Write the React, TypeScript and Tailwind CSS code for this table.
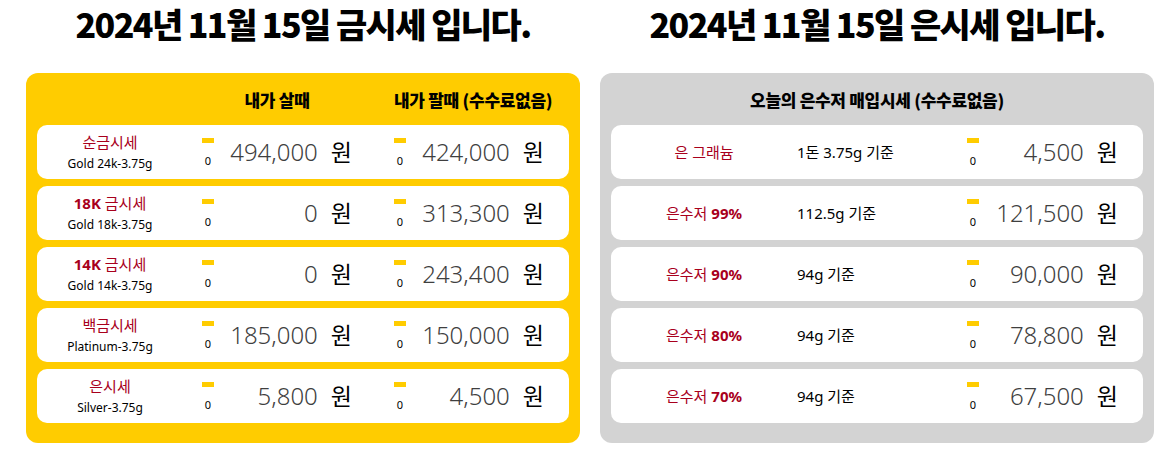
import React from "react";

type GoldRow = { name: string; bold?: string; sub: string; buy: string; sell: string };
type SilverRow = { name: string; bold?: string; desc: string; price: string };

const goldRows: GoldRow[] = [
  { name: "순금시세", sub: "Gold 24k-3.75g", buy: "494,000", sell: "424,000" },
  { bold: "18K", name: " 금시세", sub: "Gold 18k-3.75g", buy: "0", sell: "313,300" },
  { bold: "14K", name: " 금시세", sub: "Gold 14k-3.75g", buy: "0", sell: "243,400" },
  { name: "백금시세", sub: "Platinum-3.75g", buy: "185,000", sell: "150,000" },
  { name: "은시세", sub: "Silver-3.75g", buy: "5,800", sell: "4,500" },
];

const silverRows: SilverRow[] = [
  { name: "은 그래늄", desc: "1돈 3.75g 기준", price: "4,500" },
  { name: "은수저 ", bold: "99%", desc: "112.5g 기준", price: "121,500" },
  { name: "은수저 ", bold: "90%", desc: "94g 기준", price: "90,000" },
  { name: "은수저 ", bold: "80%", desc: "94g 기준", price: "78,800" },
  { name: "은수저 ", bold: "70%", desc: "94g 기준", price: "67,500" },
];

const font = "font-['Noto_Sans','Noto_Sans_CJK_KR',sans-serif]";

// 등락 표시 (노란 막대 + 0)
function Change() {
  return (
    <div className="flex w-[12px] flex-col items-center">
      <div className="h-[5px] w-[12px] bg-[#ffcc00]" />
      <span className="mt-[12px] text-[11px] leading-[12px] text-black">0</span>
    </div>
  );
}

function Price({ value }: { value: string }) {
  return (
    <div className="flex flex-1 items-center justify-end">
      <span className="text-[24px] font-light leading-none text-[#3f3f3f]">{value}</span>
      <span className="ml-[13px] text-[23px] leading-none text-black">원</span>
    </div>
  );
}

function Title({ text }: { text: string }) {
  return (
    <h1 className="flex h-[73px] items-start justify-center pt-[4px] font-['Noto_Sans_CJK_KR',sans-serif] text-[34px] font-black leading-[40px] tracking-[-1.6px] text-black">
      {text}
    </h1>
  );
}

export default function App() {
  return (
    <div className={`flex w-[1160px] gap-[20px] bg-white pl-[26px] ${font}`}>
      {/* 금시세 */}
      <div className="w-[554px]">
        <Title text="2024년 11월 15일 금시세 입니다." />
        <div className="rounded-[12px] bg-[#ffcc00] px-[11px] pb-[20px]">
          <div className="flex h-[52px] items-center pt-[2px] font-['Noto_Sans_CJK_KR',sans-serif] text-[17px] font-black tracking-[-0.3px] text-black">
            <div className="w-[165px]" />
            <div className="w-[150px] text-center">내가 살때</div>
            <div className="ml-[42px] w-[150px] whitespace-nowrap text-center">내가 팔때 (수수료없음)</div>
          </div>
          <div className="flex flex-col gap-[7px]">
            {goldRows.map((r) => (
              <div key={r.sub} className="flex h-[54px] items-center rounded-[10px] bg-white">
                <div className="flex w-[146px] flex-col items-center">
                  <span className="text-[15px] leading-[20px] text-[#a8001c]">
                    {r.bold && <b className="font-bold">{r.bold}</b>}
                    {r.name}
                  </span>
                  <span className="mt-[4px] text-[12px] leading-[16px] text-black">{r.sub}</span>
                </div>
                <div className="ml-[19px] flex w-[150px] items-center">
                  <Change />
                  <Price value={r.buy} />
                </div>
                <div className="ml-[42px] flex w-[150px] items-center">
                  <Change />
                  <Price value={r.sell} />
                </div>
              </div>
            ))}
          </div>
        </div>
      </div>

      {/* 은시세 */}
      <div className="w-[554px]">
        <Title text="2024년 11월 15일 은시세 입니다." />
        <div className="rounded-[12px] bg-[#d3d3d3] px-[11px] pb-[20px]">
          <div className="flex h-[52px] items-center justify-center pt-[2px] font-['Noto_Sans_CJK_KR',sans-serif] text-[17px] font-black tracking-[-0.3px] text-black">
            오늘의 은수저 매입시세 (수수료없음)
          </div>
          <div className="flex flex-col gap-[7px]">
            {silverRows.map((r) => (
              <div key={r.price} className="flex h-[54px] items-center rounded-[10px] bg-white pr-[25px]">
                <div className="w-[186px] text-center text-[15px] text-[#a8001c]">
                  {r.name}
                  {r.bold && <b className="font-bold">{r.bold}</b>}
                </div>
                <div className="w-[170px] text-[15px] text-black">{r.desc}</div>
                <div className="flex flex-1 items-center">
                  <Change />
                  <Price value={r.price} />
                </div>
              </div>
            ))}
          </div>
        </div>
      </div>
    </div>
  );
}
